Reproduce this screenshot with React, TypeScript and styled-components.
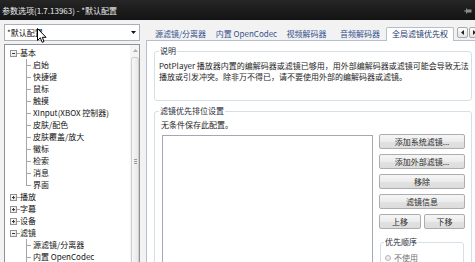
import React from "react";
import styled, { createGlobalStyle } from "styled-components";

const FONT = `"Noto Sans CJK SC", "Noto Sans", sans-serif`;

const Global = createGlobalStyle`
  html, body { margin: 0; padding: 0; overflow: hidden; background: #f2f2f2; }
  body { font-family: ${FONT}; font-size: 8px; color: #1e1e1e; }
  * { box-sizing: border-box; }
`;

const Window = styled.div`
  width: 475px;
  height: 266px;
  display: flex;
  flex-direction: column;
  overflow: hidden;
  background: #f2f2f2;
`;

const TitleBar = styled.div`
  height: 20px;
  flex-shrink: 0;
  display: flex;
  align-items: center;
  justify-content: space-between;
  padding: 1px 3px 0 2px;
  background: linear-gradient(#262626, #131313);
`;

const Title = styled.span`
  color: #ececec;
  font-size: 8px;
  line-height: 10px;
  white-space: nowrap;
`;

const Body = styled.div`
  flex: 1;
  min-height: 0;
  display: flex;
  gap: 6px;
  padding: 4px 0 0 4px;
  overflow: hidden;
`;

const Sidebar = styled.div`
  width: 136px;
  flex-shrink: 0;
  display: flex;
  flex-direction: column;
  gap: 3px;
`;

const Combo = styled.div`
  position: relative;
  height: 17px;
  flex-shrink: 0;
  display: flex;
  align-items: center;
  justify-content: space-between;
  padding: 0 3px 0 2px;
  border: 1px solid #a9b0ba;
  background: #fff;
  font-size: 8px;
  line-height: 10px;
  color: #111;
`;

const Cursor = styled.svg`
  position: absolute;
  left: 32px;
  top: 3px;
`;

const Tree = styled.div`
  flex: 1;
  min-height: 0;
  display: flex;
  border: 1px solid #8e9299;
  background: #fff;
`;

const TreeList = styled.div`
  flex: 1;
  padding-top: 2px;
  display: flex;
  flex-direction: column;
`;

const Row = styled.div<{ $child?: boolean }>`
  height: 12px;
  flex-shrink: 0;
  display: flex;
  align-items: center;
  padding-left: ${(p) => (p.$child ? 21 : 5)}px;
  font-size: 8px;
  line-height: 12px;
  white-space: nowrap;
  color: #111;
`;

const Connector = styled.span<{ $last?: boolean }>`
  width: 7px;
  height: 12px;
  flex-shrink: 0;
  background:
    linear-gradient(#a6a6a6, #a6a6a6) 0 0 / 1px ${(p) => (p.$last ? "7px" : "12px")} no-repeat,
    linear-gradient(#a6a6a6, #a6a6a6) 0 6px / 5px 1px no-repeat;
`;

const RootDash = styled.span`
  width: 3px;
  height: 1px;
  background: #a6a6a6;
  flex-shrink: 0;
`;

const ScrollBar = styled.div`
  width: 9px;
  flex-shrink: 0;
  display: flex;
  flex-direction: column;
  background: #f4f4f4;
  padding: 0 0 0 1px;
`;

const ScrollArrow = styled.div`
  height: 11px;
  flex-shrink: 0;
  display: flex;
  align-items: center;
  justify-content: center;
`;

const Thumb = styled.div`
  flex: 1;
  margin: 1px 0 0;
  border: 1px solid #cfcfcf;
  border-radius: 2px;
  background: linear-gradient(90deg, #f7f7f7, #e8e8e8);
  display: flex;
  align-items: center;
  justify-content: center;
`;

const Grip = styled.span`
  width: 3px;
  height: 5px;
  background: repeating-linear-gradient(#9a9a9a 0 1px, transparent 1px 2px);
`;

const Main = styled.div`
  width: 334px;
  flex-shrink: 0;
  display: flex;
  flex-direction: column;
`;

const TabStrip = styled.div`
  height: 16px;
  flex-shrink: 0;
  display: flex;
  align-items: flex-end;
  padding-left: 1px;
  position: relative;
  z-index: 1;
`;

const Tab = styled.div<{ $w: number; $active?: boolean }>`
  width: ${(p) => p.$w}px;
  height: ${(p) => (p.$active ? 14 : 13)}px;
  margin-bottom: ${(p) => (p.$active ? -1 : 0)}px;
  padding-bottom: ${(p) => (p.$active ? 1 : 0)}px;
  flex-shrink: 0;
  display: flex;
  align-items: center;
  justify-content: center;
  font-size: 8px;
  line-height: 10px;
  white-space: nowrap;
  color: ${(p) => (p.$active ? "#1d3a70" : "#34508c")};
  background: ${(p) => (p.$active ? "#fff" : "transparent")};
  border: ${(p) => (p.$active ? "1px solid #b3bfcd" : "none")};
  border-bottom: none;
  border-radius: 2px 2px 0 0;
`;

const TabScroll = styled.div`
  display: flex;
  gap: 1px;
  margin: 0 0 2px 3px;
`;

const ScrollBtn = styled.div`
  width: 11px;
  height: 11px;
  border: 1px solid #a9a9a9;
  border-radius: 2px;
  background: linear-gradient(#fdfdfd, #e4e4e4);
  display: flex;
  align-items: center;
  justify-content: center;
`;

const Panel = styled.div`
  flex: 1;
  display: flex;
  flex-direction: column;
  border: 1px solid #b3bfcd;
  background: #fff;
  padding: 10px 7px 0 7px;
`;

const GroupBox = styled.div<{ $h: number; $gap?: number }>`
  height: ${(p) => p.$h}px;
  margin-top: ${(p) => p.$gap ?? 0}px;
  flex-shrink: 0;
  border: 1px solid #d5dfe5;
  border-radius: 3px;
  display: flex;
  flex-direction: column;
`;

const Legend = styled.span<{ $ml?: number }>`
  align-self: flex-start;
  margin: -6px 0 0 ${(p) => p.$ml ?? 4}px;
  padding: 0 1px;
  background: #fff;
  font-size: 8px;
  line-height: 10px;
  color: #1e2a3a;
  white-space: nowrap;
`;

const Desc = styled.div`
  margin-top: 4px;
  padding-left: 4px;
  font-size: 8px;
  line-height: 11px;
  color: #1e1e1e;
`;

const Line = styled.div`
  white-space: nowrap;
`;

const Note = styled.div`
  margin-top: 3px;
  padding-left: 6px;
  font-size: 8px;
  line-height: 11px;
  color: #1e1e1e;
`;

const ListRow = styled.div`
  display: flex;
  gap: 6px;
  margin-top: 4px;
  padding: 0 6px 0 7px;
`;

const ListBox = styled.div`
  flex: 1;
  height: 160px;
  margin-top: 1px;
  border: 1px solid #a4a9b1;
  background: #fff;
`;

const ButtonCol = styled.div`
  width: 86px;
  flex-shrink: 0;
  display: flex;
  flex-direction: column;
  gap: 5px;
`;

const ButtonPair = styled.div`
  display: flex;
  justify-content: space-between;
`;

const Button = styled.div<{ $w?: number }>`
  height: 15px;
  width: ${(p) => (p.$w ? `${p.$w}px` : "auto")};
  display: flex;
  align-items: center;
  justify-content: center;
  border: 1px solid #adadad;
  border-radius: 2px;
  background: linear-gradient(#f6f6f6, #ececec 50%, #e2e2e2 51%, #dcdcdc);
  font-size: 8px;
  line-height: 10px;
  color: #2a2a2a;
  white-space: nowrap;
`;

const PriorityGroup = styled.div`
  height: 40px;
  margin: 8px 1px 0;
  border: 1px solid #d5dfe5;
  border-radius: 3px;
  display: flex;
  flex-direction: column;
`;

const RadioRow = styled.div`
  height: 11px;
  margin-top: 5px;
  padding-left: 4px;
  display: flex;
  align-items: center;
  gap: 3px;
  font-size: 8px;
  line-height: 11px;
  color: #6f6f6f;
`;

const Radio = styled.span`
  width: 6px;
  height: 6px;
  border-radius: 50%;
  border: 1px solid #b7b7b7;
  background: #eeeeee;
`;

const Expander = ({ open }: { open: boolean }) => (
  <svg width="7" height="7" viewBox="0 0 7 7" style={{ flexShrink: 0 }}>
    <defs>
      <linearGradient id="exg" x1="0" y1="0" x2="1" y2="1">
        <stop offset="0" stopColor="#ffffff" />
        <stop offset="1" stopColor="#dedede" />
      </linearGradient>
    </defs>
    <rect x="0.5" y="0.5" width="6" height="6" fill="url(#exg)" stroke="#929292" />
    <line x1="2" y1="3.5" x2="5" y2="3.5" stroke="#3a3a3a" />
    {!open && <line x1="3.5" y1="2" x2="3.5" y2="5" stroke="#3a3a3a" />}
  </svg>
);

type Node = { label: string; open?: boolean; more?: boolean; children?: string[] };

const tree: Node[] = [
  {
    label: "基本",
    open: true,
    children: [
      "启始",
      "快捷键",
      "鼠标",
      "触摸",
      "XInput(XBOX 控制器)",
      "皮肤/配色",
      "皮肤覆盖/放大",
      "徽标",
      "检索",
      "消息",
      "界面",
    ],
  },
  { label: "播放" },
  { label: "字幕" },
  { label: "设备" },
  { label: "滤镜", open: true, more: true, children: ["源滤镜/分离器", "内置 OpenCodec"] },
];

const tabs = [
  { label: "源滤镜/分离器", w: 67 },
  { label: "内置 OpenCodec", w: 65 },
  { label: "视频解码器", w: 55 },
  { label: "音频解码器", w: 52 },
  { label: "全局滤镜优先权", w: 68, active: true },
];

export default function App() {
  return (
    <>
      <Global />
      <Window>
        <TitleBar>
          <Title>参数选项(1.7.13963) - *默认配置</Title>
          <svg width="8" height="6" viewBox="0 0 8 6">
            <line x1="0" y1="3" x2="2" y2="3" stroke="#8d8d8d" />
            <line x1="2.5" y1="0.5" x2="2.5" y2="5.5" stroke="#8d8d8d" />
            <rect x="3" y="1.5" width="4.5" height="3" fill="#8d8d8d" />
          </svg>
        </TitleBar>
        <Body>
          <Sidebar>
            <Combo>
              <span>*默认配置</span>
              <svg width="5" height="3" viewBox="0 0 5 3">
                <path d="M0 0 H5 L2.5 3 Z" fill="#111" />
              </svg>
              <Cursor width="10" height="16" viewBox="0 0 10 16">
                <path
                  d="M0.5 0.5 L0.5 12.5 L3.3 9.8 L5.2 14.3 L7 13.5 L5.3 9.3 L9 9.3 Z"
                  fill="#fff"
                  stroke="#000"
                  strokeWidth="1"
                  strokeLinejoin="round"
                />
              </Cursor>
            </Combo>
            <Tree>
              <TreeList>
                {tree.map((n) => (
                  <React.Fragment key={n.label}>
                    <Row>
                      <Expander open={!!n.open} />
                      <RootDash />
                      <span>{n.label}</span>
                    </Row>
                    {n.open &&
                      n.children?.map((c, i) => (
                        <Row $child key={c}>
                          <Connector
                            $last={!n.more && i === (n.children?.length ?? 0) - 1}
                          />
                          <span>{c}</span>
                        </Row>
                      ))}
                  </React.Fragment>
                ))}
              </TreeList>
              <ScrollBar>
                <ScrollArrow>
                  <svg width="5" height="3" viewBox="0 0 5 3">
                    <path d="M0 3 H5 L2.5 0 Z" fill="#b0b0b0" />
                  </svg>
                </ScrollArrow>
                <Thumb>
                  <Grip />
                </Thumb>
              </ScrollBar>
            </Tree>
          </Sidebar>
          <Main>
            <TabStrip>
              {tabs.map((t) => (
                <Tab key={t.label} $w={t.w} $active={t.active}>
                  {t.label}
                </Tab>
              ))}
              <TabScroll>
                <ScrollBtn>
                  <svg width="3" height="5" viewBox="0 0 3 5">
                    <path d="M3 0 V5 L0 2.5 Z" fill="#222" />
                  </svg>
                </ScrollBtn>
                <ScrollBtn>
                  <svg width="3" height="5" viewBox="0 0 3 5">
                    <path d="M0 0 V5 L3 2.5 Z" fill="#222" />
                  </svg>
                </ScrollBtn>
              </TabScroll>
            </TabStrip>
            <Panel>
              <GroupBox $h={50}>
                <Legend>说明</Legend>
                <Desc>
                  <Line>PotPlayer 播放器内置的编解码器或滤镜已够用，用外部编解码器或滤镜可能会导致无法</Line>
                  <Line>播放或引发冲突。除非万不得已，请不要使用外部的编解码器或滤镜。</Line>
                </Desc>
              </GroupBox>
              <GroupBox $h={220} $gap={10}>
                <Legend>滤镜优先排位设置</Legend>
                <Note>无条件保存此配置。</Note>
                <ListRow>
                  <ListBox />
                  <ButtonCol>
                    <Button>添加系统滤镜...</Button>
                    <Button>添加外部滤镜...</Button>
                    <Button>移除</Button>
                    <Button>滤镜信息</Button>
                    <ButtonPair>
                      <Button $w={42}>上移</Button>
                      <Button $w={41}>下移</Button>
                    </ButtonPair>
                    <PriorityGroup>
                      <Legend $ml={3}>优先顺序</Legend>
                      <RadioRow>
                        <Radio />
                        <span>不使用</span>
                      </RadioRow>
                    </PriorityGroup>
                  </ButtonCol>
                </ListRow>
              </GroupBox>
            </Panel>
          </Main>
        </Body>
      </Window>
    </>
  );
}
